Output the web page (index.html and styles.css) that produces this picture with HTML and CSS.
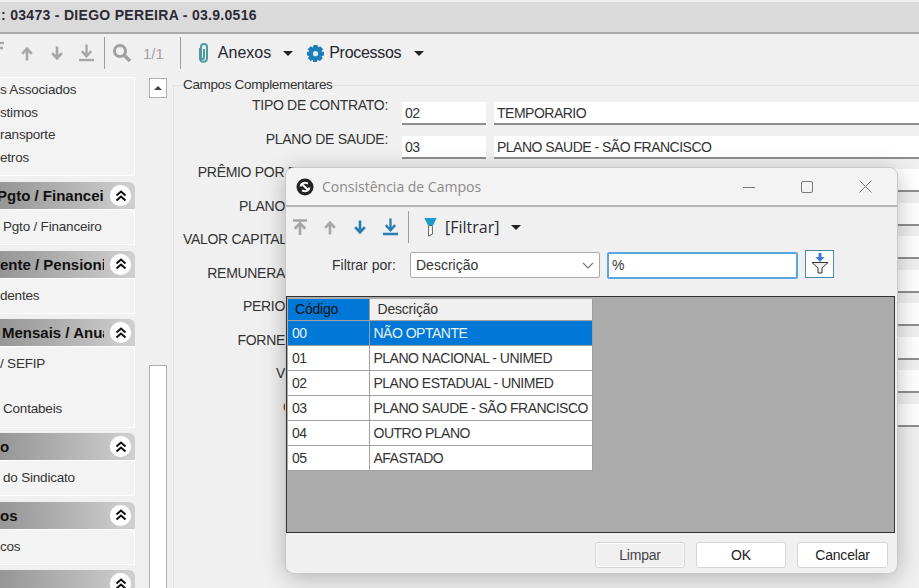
FILE: index.html
```html
<!DOCTYPE HTML>
<html>
<head>
<title>Consistência de Campos</title>
<meta charset="utf-8" />
<link rel="stylesheet" href="styles.css">
</head>
<body>
  <svg class="defs" width="0" height="0">
    <symbol id="i-up" viewBox="0 0 16 18"><path d="M8 17V5M2.500 9.500 8 3.500l5.500 6" fill="none" stroke="currentColor" stroke-width="3"/></symbol>
    <symbol id="i-down" viewBox="0 0 16 18"><path d="M8 1v12M2.500 8.500l5.500 6 5.500-6" fill="none" stroke="currentColor" stroke-width="3"/></symbol>
    <symbol id="i-first" viewBox="0 0 16 18"><path d="M0 1.500h16" stroke="currentColor" stroke-width="3"/><path d="M8 18V6M2 11 8 4.500l6 6.500" fill="none" stroke="currentColor" stroke-width="3"/></symbol>
    <symbol id="i-last" viewBox="0 0 16 18"><path d="M8 0v11M3 7l5 5.500L13 7" fill="none" stroke="currentColor" stroke-width="2.500"/><path d="M0 16.500h16" stroke="currentColor" stroke-width="2.500"/></symbol>
    <symbol id="i-chev" viewBox="0 0 12 12"><path d="M1.500 5.500 6 1.500l4.500 4M1.500 10.500 6 6.500l4.500 4" fill="none" stroke="#111" stroke-width="2"/></symbol>
  </svg>

  <div class="titlebar"><span>: 03473 - DIEGO PEREIRA - 03.9.0516</span></div>

  <div class="toolbar">
    <svg class="tool tool-cut" width="4" height="16"><path d="M0 2h4M0 7h3" stroke="#a8a8a8" stroke-width="2.500"/></svg>
    <svg class="tool tool-up" width="14" height="17"><use href="#i-up"/></svg>
    <svg class="tool tool-down" width="14" height="17"><use href="#i-down"/></svg>
    <svg class="tool tool-last" width="15" height="18"><use href="#i-last"/></svg>
    <i class="sep sep-a"></i>
    <svg class="tool tool-search" width="20" height="20" viewBox="0 0 20 20"><circle cx="8" cy="8" r="5.500" fill="none" stroke="#a0a0a0" stroke-width="3"/><path d="M12 12l6 6" stroke="#a0a0a0" stroke-width="3.500"/></svg>
    <span class="pager">1/1</span>
    <i class="sep sep-b"></i>
    <svg class="clip" width="12" height="20" viewBox="0 0 12 20"><path d="M3 5v10c0 5 7 5 7 0V4C10 0 4 0 4 4v10c0 2.500 3 2.500 3 0V6" fill="none" stroke="#4a9a9e" stroke-width="2"/></svg>
    <span class="tool-label label-anexos">Anexos</span>
    <i class="caret caret-anexos"></i>
    <svg class="gear" width="17" height="17" viewBox="0 0 17 17"><path d="M6.500 0h4l.5 2.500 2.200-1.200 2.800 2.800L14.500 6.500 17 7v3.500l-2.500.5 1.200 2.300-2.800 2.800-2.400-1.300-.5 2.200h-4L6 14.800l-2.300 1.300-2.800-2.800L2.200 11 0 10.500V7l2.200-.5L.9 4.100l2.800-2.800L6 2.500z" fill="#1a7fb8"/><circle cx="8.500" cy="8.700" r="2.600" fill="#dcecf5"/></svg>
    <span class="tool-label label-processos">Processos</span>
    <i class="caret caret-processos"></i>
  </div>

  <div class="main">
    <div class="sidebar">
      <div class="panel panel-first">
        <div class="item">s Associados</div>
        <div class="item">stimos</div>
        <div class="item">ransporte</div>
        <div class="item">etros</div>
      </div>
      <div class="head"><b class="head-text head-pgto">Pgto / Financeiro</b><span class="collapse"><svg width="12" height="12"><use href="#i-chev"/></svg></span></div>
      <div class="panel"><div class="item indent">Pgto / Financeiro</div></div>
      <div class="head"><b class="head-text">ente / Pensionista</b><span class="collapse"><svg width="12" height="12"><use href="#i-chev"/></svg></span></div>
      <div class="panel"><div class="item">dentes</div></div>
      <div class="head"><b class="head-text indent">Mensais / Anuais</b><span class="collapse"><svg width="12" height="12"><use href="#i-chev"/></svg></span></div>
      <div class="panel panel-tall">
        <div class="item">/ SEFIP</div>
        <div class="item">&nbsp;</div>
        <div class="item indent">Contabeis</div>
      </div>
      <div class="head"><b class="head-text">o</b><span class="collapse"><svg width="12" height="12"><use href="#i-chev"/></svg></span></div>
      <div class="panel"><div class="item indent">do Sindicato</div></div>
      <div class="head"><b class="head-text">os</b><span class="collapse"><svg width="12" height="12"><use href="#i-chev"/></svg></span></div>
      <div class="panel"><div class="item">cos</div></div>
      <div class="head"><b class="head-text"></b><span class="collapse"><svg width="12" height="12"><use href="#i-chev"/></svg></span></div>
    </div>

    <div class="scroller">
      <div class="scroll-btn"><i class="caret-up"></i></div>
      <div class="scroll-thumb"></div>
    </div>

    <fieldset class="campos">
      <legend>Campos Complementares</legend>
      <div class="row"><label>TIPO DE CONTRATO:</label><div class="inp code">02</div><div class="inp desc">TEMPORARIO</div></div>
      <div class="row"><label>PLANO DE SAUDE:</label><div class="inp code">03</div><div class="inp desc">PLANO SAUDE - SÃO FRANCISCO</div></div>
      <div class="row"><label>PRÊMIO POR DESEMPENHO:</label><div class="inp code"></div><div class="inp desc"></div></div>
      <div class="row"><label class="cut">PLANO</label><div class="inp code"></div><div class="inp desc"></div></div>
      <div class="row"><label class="cut">VALOR CAPITAL</label><div class="inp code"></div><div class="inp desc"></div></div>
      <div class="row"><label class="cut">REMUNERA</label><div class="inp code"></div><div class="inp desc"></div></div>
      <div class="row"><label class="cut">PERIO</label><div class="inp code"></div><div class="inp desc"></div></div>
      <div class="row"><label class="cut">FORNE</label><div class="inp code"></div><div class="inp desc"></div></div>
      <div class="row"><label class="cut">V</label><div class="inp code"></div><div class="inp desc"></div></div>
      <div class="row"><label class="cut cut-last">C</label><div class="inp code"></div><div class="inp desc"></div></div>
    </fieldset>
  </div>

  <div class="dialog">
    <div class="dlg-title">
      <svg width="18" height="18" viewBox="0 0 18 18"><circle cx="9" cy="9" r="8.500" fill="#222"/><path d="M4.500 8.500C5 5 8 4 12 5.500M13.500 9.500C13 13 10 14 6 12.500M6.500 6.500l5 5" fill="none" stroke="#fff" stroke-width="2"/></svg>
      <span class="dlg-name">Consistência de Campos</span>
      <div class="win-btns">
        <svg width="12" height="12"><path d="M0 6.500h12" stroke="#777"/></svg>
        <svg width="12" height="12"><rect x=".5" y=".5" width="11" height="11" rx="1.500" fill="none" stroke="#777"/></svg>
        <svg width="13" height="13"><path d="M.5.500l12 12M12.500.500l-12 12" stroke="#777"/></svg>
      </div>
    </div>
    <div class="dlg-tools">
      <svg class="nav off" width="14" height="18"><use href="#i-first"/></svg>
      <svg class="nav off" width="14" height="17"><use href="#i-up"/></svg>
      <svg class="nav on" width="14" height="17"><use href="#i-down"/></svg>
      <svg class="nav on nav-end" width="15" height="18"><use href="#i-last"/></svg>
      <i class="dlg-sep"></i>
      <svg class="funnel" width="13" height="19" viewBox="0 0 13 20"><path d="M0 0h13L9 8H4z" fill="#1a9ad0"/><path d="M4.500 8h4v9l-4 2z" fill="#fff" stroke="#555"/></svg>
      <span class="filtrar">[Filtrar]</span>
      <i class="caret"></i>
    </div>
    <div class="dlg-filter">
      <span class="filter-label">Filtrar por:</span>
      <div class="select">Descrição
        <svg width="12" height="7"><path d="M1 1l5 5 5-5" fill="none" stroke="#777" stroke-width="1.200"/></svg>
      </div>
      <div class="filter-input">%</div>
      <button class="filter-go">
        <svg width="18" height="22" viewBox="0 0 18 22"><path d="M9 1v5" stroke="#3c78e0" stroke-width="3"/><path d="M4.500 5h9L9 10z" fill="#3c78e0"/><path d="M1 10.500h16L11 16v5l-4 0v-5z" fill="#eee" stroke="#333"/></svg>
      </button>
    </div>
    <div class="grid-area">
      <table class="grid">
        <tr><th class="th-code">Código</th><th>Descrição</th></tr>
        <tr class="sel"><td>00</td><td>NÃO OPTANTE</td></tr>
        <tr><td>01</td><td>PLANO NACIONAL - UNIMED</td></tr>
        <tr><td>02</td><td>PLANO ESTADUAL - UNIMED</td></tr>
        <tr><td>03</td><td>PLANO SAUDE - SÃO FRANCISCO</td></tr>
        <tr><td>04</td><td>OUTRO PLANO</td></tr>
        <tr><td>05</td><td>AFASTADO</td></tr>
      </table>
    </div>
    <div class="dlg-foot">
      <button class="btn btn-off">Limpar</button>
      <button class="btn">OK</button>
      <button class="btn">Cancelar</button>
    </div>
  </div>
</body>
</html>
```

FILE: styles.css
```css
*{
  margin:0;
  padding:0;
  box-sizing:border-box;
}
html,body{
  width:919px;
  height:588px;
  overflow:hidden;
}
body{
  position:relative;
  background-color:#f0f0f0;
  font-family:"Liberation Sans",Arial,sans-serif;
  font-size:14px;
  color:#333;
}
.defs{
  position:absolute;
}

/* topo */
.titlebar{
  height:32px;
  margin-top:2px;
  padding-left:1px;
  background-color:#dadada;
  border-bottom:2px solid #a9a9a9;
  font-weight:bold;
  font-size:14px;
  letter-spacing:.3px;
  line-height:27px;
  color:#2b2b35;
}
.toolbar{
  display:flex;
  align-items:center;
  height:36px;
  padding-top:2px;
  color:#a6a6a6;
}
.tool-cut{margin-top:-8px;}
.tool-up{margin-left:16px;}
.tool-down{margin-left:16px;}
.tool-last{margin-left:15px;}
.sep{
  width:1px;
  height:32px;
  background-color:#a0a0a0;
}
.sep-a{margin-left:10px;}
.tool-search{margin-left:7px;margin-top:-1px;}
.pager{
  margin-left:11px;
  font-size:15px;
  color:#a0a0a0;
}
.sep-b{margin-left:16px;}
.clip{margin-left:16px;}
.tool-label{
  font-size:16px;
  color:#26262e;
}
.label-anexos{margin-left:9px;}
.caret{
  width:0;
  height:0;
  border-left:5px solid transparent;
  border-right:5px solid transparent;
  border-top:5px solid #222;
}
.caret-anexos{margin-left:12px;}
.gear{margin-left:14px;}
.label-processos{margin-left:5px;letter-spacing:-.3px;}
.caret-processos{margin-left:13px;}

/* corpo */
.main{
  display:flex;
  align-items:flex-start;
}
.sidebar{
  flex:none;
  width:135px;
  margin-top:7px;
}
.panel{
  height:36px;
  margin-bottom:5.500px;
  padding-top:6px;
  background-color:#f3f3f3;
  border:1px solid #fff;
  border-left:0;
  font-size:13.500px;
  letter-spacing:-.2px;
}
.panel-first{
  height:99px;
  margin-bottom:6px;
  padding-top:1px;
}
.panel-tall{
  height:81.500px;
}
.item{
  height:22.500px;
  line-height:22px;
  white-space:nowrap;
  overflow:hidden;
}
.indent{padding-left:3px;}
.head{
  display:flex;
  align-items:center;
  height:27px;
  padding-right:4px;
  background:linear-gradient(to right,#969696,#d0d0d0);
  border-top-right-radius:6px;
}
.head-text{
  flex:1;
  min-width:0;
  margin-right:6px;
  overflow:hidden;
  white-space:nowrap;
  font-size:15px;
  line-height:25px;
  color:#111;
}
.head-text.indent{padding-left:2px;}
.head-pgto{margin-left:-3px;}
.collapse{
  display:flex;
  align-items:center;
  justify-content:center;
  flex:none;
  width:21px;
  height:21px;
  border-radius:50%;
  background-color:#fff;
  box-shadow:0 0 2px #ddd;
}
.scroller{
  flex:none;
  display:flex;
  flex-direction:column;
  align-items:center;
  width:18px;
  height:518px;
  margin-left:14px;
  margin-top:8px;
}
.scroll-btn{
  display:flex;
  align-items:center;
  justify-content:center;
  width:18px;
  height:20px;
  background-color:#fff;
  border:1px solid #adadad;
}
.caret-up{
  width:0;
  height:0;
  border-left:4px solid transparent;
  border-right:4px solid transparent;
  border-bottom:4px solid #444;
}
.scroll-thumb{
  width:18px;
  margin-top:267px;
  flex:1;
  background-color:#fff;
  border:1px solid #adadad;
  border-bottom:0;
}
.campos{
  flex:none;
  width:760px;
  height:530px;
  margin-left:6px;
  margin-top:7px;
  padding:4px 0 0 9px;
  border:1px solid #e2e2e2;
  border-right:0;
  border-bottom:0;
}
.campos legend{
  padding-right:1px;
  font-size:13.500px;
  letter-spacing:-.35px;
  line-height:16px;
  color:#333;
}
.row{
  display:flex;
  align-items:flex-start;
  height:33.550px;
}
.row label{
  flex:none;
  width:205px;
  text-align:right;
  white-space:nowrap;
  line-height:16px;
  letter-spacing:-.3px;
}
/* o resto do rotulo fica atras da janela */
.row label.cut{
  padding-right:103px;
}
.row label.cut-last{
  padding-right:0;
  padding-left:100px;
  text-align:left;
}
.inp{
  height:23px;
  margin-top:5px;
  padding-left:3px;
  background-color:#fff;
  border-bottom:2px solid #8f8f8f;
  letter-spacing:-.5px;
  line-height:22px;
  white-space:nowrap;
}
.code{
  flex:none;
  width:84px;
  margin-left:14px;
}
.desc{
  flex:none;
  width:426px;
  margin-left:8px;
}

/* janela */
.dialog{
  position:absolute;
  left:286px;
  top:168px;
  display:flex;
  flex-direction:column;
  width:611px;
  height:405px;
  background-color:#f0f0f0;
  border-radius:8px;
  box-shadow:0 0 0 1px #c8c8c8,0 4px 24px rgba(0,0,0,.28);
  overflow:hidden;
}
.dlg-title{
  display:flex;
  align-items:center;
  flex:none;
  height:39px;
  padding-left:10px;
  background-color:#f3f3f3;
  border-bottom:2px solid #b4b4b4;
}
.dlg-name{
  margin-left:8px;
  font-family:"Open Sans",sans-serif;
  font-size:14px;
  color:#8a8a8a;
}
.win-btns{
  display:flex;
  align-items:center;
  gap:46px;
  margin-left:auto;
  margin-right:25px;
}
.dlg-tools{
  display:flex;
  align-items:center;
  flex:none;
  height:38px;
  padding-left:7px;
  padding-top:2px;
}
.nav{margin-right:16px;}
.nav.off{color:#a6a6a6;}
.nav.on{color:#2a7cb2;}
.nav.nav-end{margin-right:10px;}
.dlg-sep{
  width:1px;
  height:32px;
  background-color:#a0a0a0;
}
.funnel{margin-left:15px;}
.filtrar{
  margin-left:8px;
  font-family:"Open Sans",sans-serif;
  font-size:16px;
  color:#2a2a35;
}
.dlg-tools .caret{margin-left:12px;}
.dlg-filter{
  display:flex;
  align-items:center;
  flex:none;
  height:51px;
  padding:0 0 11px 46px;
}
.filter-label{width:78px;}
.select{
  display:flex;
  align-items:center;
  justify-content:space-between;
  width:190px;
  height:26px;
  padding:0 5px;
  background-color:#fff;
  border:1px solid #aaa;
  border-radius:2px;
}
.filter-input{
  width:191px;
  height:27px;
  margin-left:7px;
  padding-left:3px;
  background-color:#fff;
  border:2px solid #5aa6de;
  border-radius:2px;
  line-height:23px;
}
.filter-go{
  width:29px;
  height:28px;
  margin-left:7px;
  margin-top:-2px;
  padding-top:1px;
  background-color:#fff;
  border:1px solid #4a8ba8;
}
.grid-area{
  flex:none;
  width:609px;
  height:237px;
  padding:2px 0 0 1px;
  background-color:#ababab;
  border:1px solid #333;
}
.grid{
  border-collapse:collapse;
  table-layout:fixed;
  width:305px;
  font-size:14px;
}
.grid th{
  height:21px;
  padding-left:8px;
  text-align:left;
  font-weight:normal;
  letter-spacing:-.2px;
  background-color:#f0f0f0;
  color:#333;
  border-right:1px solid #a0a0a0;
}
.grid th.th-code{
  width:81px;
  padding-left:7px;
  background-color:#0078d7;
  color:#111;
}
.grid td{
  height:25px;
  padding-left:4px;
  background-color:#fff;
  border:1px solid #a0a0a0;
  border-left:0;
  letter-spacing:-.5px;
  white-space:nowrap;
  overflow:hidden;
}
.grid .sel td{
  background-color:#0078d7;
  color:#e8f0f8;
}
.dlg-foot{
  display:flex;
  justify-content:flex-end;
  gap:11px;
  flex:1;
  padding:9px 9px 0 0;
}
.btn{
  width:90px;
  height:26px;
  background-color:#fff;
  border:1px solid #d6d6d6;
  border-radius:3px;
  font-family:"Liberation Sans",Arial,sans-serif;
  font-size:14px;
  letter-spacing:-.2px;
  color:#222;
}
.btn:last-child{width:91px;}
.btn-off{
  background-color:#f0f0f0;
  box-shadow:inset 0 0 0 1px #fff;
  color:#444;
}
```
